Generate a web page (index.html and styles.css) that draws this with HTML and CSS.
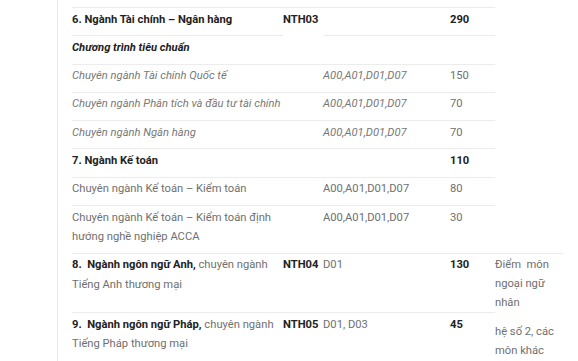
FILE: index.html
```html
<!DOCTYPE html>
<html lang="vi">
<head>
<meta charset="utf-8">
<link rel="stylesheet" href="styles.css">
</head>
<body>
<div class="wrap">
<table class="tbl">
<colgroup>
<col class="c1"><col class="c2"><col class="c3"><col class="c4"><col class="c5">
</colgroup>
<tbody>
<tr>
<td class="b">6. Ngành Tài chính – Ngân hàng</td>
<td class="b">NTH03</td>
<td></td>
<td class="b">290</td>
<td class="nb"></td>
</tr>
<tr>
<td class="bi">Chương trình tiêu chuẩn</td>
<td class="nt"></td>
<td></td>
<td></td>
<td class="nb"></td>
</tr>
<tr>
<td class="i">Chuyên ngành Tài chính Quốc tế</td>
<td></td>
<td class="i">A00,A01,D01,D07</td>
<td>150</td>
<td class="nb"></td>
</tr>
<tr>
<td class="i">Chuyên ngành Phân tích và đầu tư tài chính</td>
<td></td>
<td class="i">A00,A01,D01,D07</td>
<td>70</td>
<td class="nb"></td>
</tr>
<tr>
<td class="i">Chuyên ngành Ngân hàng</td>
<td></td>
<td class="i">A00,A01,D01,D07</td>
<td>70</td>
<td class="nb"></td>
</tr>
<tr>
<td class="b">7. Ngành Kế toán</td>
<td></td>
<td></td>
<td class="b">110</td>
<td class="nb"></td>
</tr>
<tr>
<td>Chuyên ngành Kế toán – Kiểm toán</td>
<td></td>
<td>A00,A01,D01,D07</td>
<td>80</td>
<td class="nb"></td>
</tr>
<tr>
<td>Chuyên ngành Kế toán – Kiểm toán định<br>hướng nghề nghiệp ACCA</td>
<td></td>
<td>A00,A01,D01,D07</td>
<td>30</td>
<td class="nb"></td>
</tr>
<tr>
<td><span class="strong">8.&nbsp; Ngành ngôn ngữ Anh,</span> chuyên ngành<br>Tiếng Anh thương mại</td>
<td class="b">NTH04</td>
<td>D01</td>
<td class="b">130</td>
<td class="note">Điểm&nbsp; môn<br>ngoại ngữ<br>nhân</td>
</tr>
<tr>
<td><span class="strong">9.&nbsp; Ngành ngôn ngữ Pháp,</span> chuyên ngành<br>Tiếng Pháp thương mại</td>
<td class="b">NTH05</td>
<td>D01, D03</td>
<td class="b">45</td>
<td class="note2">hệ số 2, các<br>môn khác</td>
</tr>
</tbody>
</table>
</div>
</body>
</html>
```

FILE: styles.css
```css
html, body {
  margin: 0;
  padding: 0;
  background: #fff;
  height: 100%;
}
.wrap {
  margin-left: 57px;
  border-left: 1px solid #e8e8e8;
  padding-left: 14px;
  padding-top: 7px;
  min-height: 100%;
  box-sizing: border-box;
}
.tbl {
  border-collapse: collapse;
  table-layout: fixed;
  width: 491px;
  font-family: Roboto, "Liberation Sans", sans-serif;
  font-size: 11.2px;
  line-height: 19.5px;
  color: #6f6f6f;
}
.c1 { width: 211px; }
.c2 { width: 40px; }
.c3 { width: 127px; }
.c4 { width: 45px; }
.c5 { width: 68px; }
.tbl td {
  border-top: 1px solid #ececec;
  padding: 1.5px 0 6.3px 0;
  vertical-align: top;
  white-space: nowrap;
}
.tbl td.nb { border-top-color: transparent; }
.tbl td.nt { border-top-color: transparent; }
.b, .strong {
  font-weight: 700;
  color: #222;
}
.bi {
  font-weight: 700;
  font-style: italic;
  color: #222;
}
.i {
  font-style: italic;
  color: #777;
}
.tbl td.note {
  padding-bottom: 0;
  line-height: 19px;
}
.tbl td.note2 {
  border-top-color: transparent;
  padding-top: 9px;
  line-height: 19px;
}
```
